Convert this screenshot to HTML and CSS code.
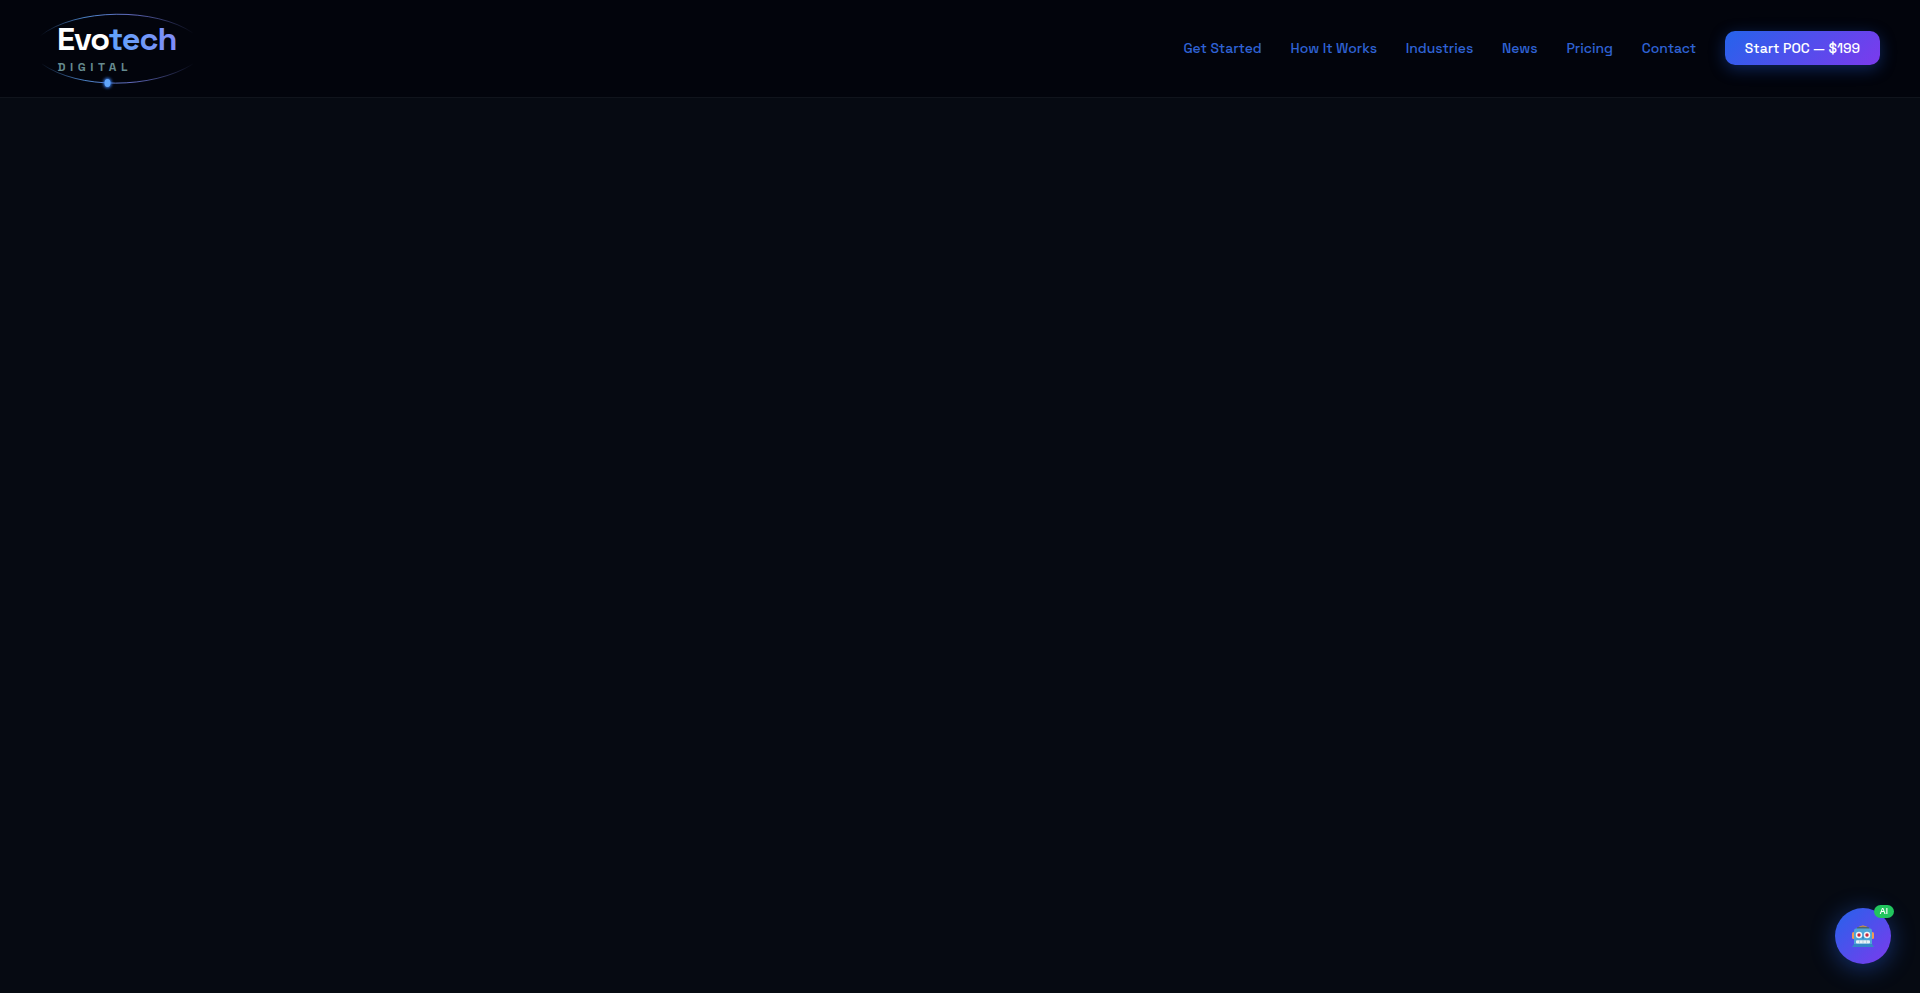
FILE: index.html
```html
<!DOCTYPE html>
<html lang="en">
<head>
  <meta charset="UTF-8" />
  <meta name="viewport" content="width=device-width, initial-scale=1.0"/>
  <title>Evotech Digital</title>
  <link rel="stylesheet" href="styles.css">
</head>
<body>

  <header class="navbar">
    <a href="#" class="logo" aria-label="Evotech Digital">
      <svg width="160" height="84" viewBox="0 0 160 84">
        <defs>
          <linearGradient id="arc" gradientUnits="userSpaceOnUse" x1="0" y1="0" x2="154" y2="0">
            <stop offset="0" stop-color="#60a5fa" stop-opacity="0"/>
            <stop offset="0.3" stop-color="#60a5fa" stop-opacity="0.8"/>
            <stop offset="0.6" stop-color="#818cf8" stop-opacity="0.75"/>
            <stop offset="1" stop-color="#818cf8" stop-opacity="0"/>
          </linearGradient>
          <linearGradient id="tech" gradientUnits="userSpaceOnUse" x1="69" y1="0" x2="137" y2="0">
            <stop offset="0" stop-color="#60a5fa"/>
            <stop offset="1" stop-color="#818cf8"/>
          </linearGradient>
          <filter id="glow" x="-150%" y="-150%" width="400%" height="400%">
            <feGaussianBlur stdDeviation="1.5"/>
          </filter>
        </defs>
        <path d="M0 29 C36 0.5 116 0.5 153 26" fill="none" stroke="url(#arc)" stroke-width="1"/>
        <path d="M2 57 C38 82.5 112 82.5 153 57" fill="none" stroke="url(#arc)" stroke-width="1"/>
        <text class="logo-name" x="17" y="43" textLength="119.5" lengthAdjust="spacingAndGlyphs" fill="#fff">Evo<tspan fill="url(#tech)">tech</tspan></text>
        <text class="logo-sub" x="17.5" y="64" textLength="70">DIGITAL</text>
        <ellipse cx="67.5" cy="76" rx="4" ry="5" fill="#3b82f6" filter="url(#glow)"/>
        <ellipse cx="67.5" cy="76" rx="3" ry="4" fill="#60a5fa"/>
      </svg>
    </a>

    <nav class="nav-links">
      <a href="#">Get Started</a>
      <a href="#">How It Works</a>
      <a href="#">Industries</a>
      <a href="#">News</a>
      <a href="#">Pricing</a>
      <a href="#">Contact</a>
      <a href="#" class="nav-cta">Start POC — $199</a>
    </nav>
  </header>

  <button class="chat-btn" aria-label="Chat">
    <svg width="24" height="24" viewBox="0 0 24 24">
      <path d="M6 4 Q12 -1 18 4Z" fill="#f5a43a"/>
      <path d="M6 3.2 Q12 2 18 3.2 V5.5 H6Z" fill="#4c6572"/>
      <rect x="1" y="8" width="3" height="7" rx="1.5" fill="#ef9a55"/>
      <rect x="20" y="8" width="3" height="7" rx="1.5" fill="#ef9a55"/>
      <path d="M5 4.5 H19 Q21 4.5 21 6.5 V20 H3 V6.5 Q3 4.5 5 4.5Z" fill="#4fa5d8"/>
      <path d="M3 20 H21 L23 23 H1Z" fill="#3487c6"/>
      <circle cx="8" cy="11" r="3.2" fill="#f1f5f9"/>
      <circle cx="16" cy="11" r="3.2" fill="#f1f5f9"/>
      <circle cx="8" cy="11" r="1.7" fill="#c5283d"/>
      <circle cx="16" cy="11" r="1.7" fill="#c5283d"/>
      <path d="M12 12 L13 14.5 H11Z" fill="#287ab8"/>
      <rect x="5" y="16.2" width="14" height="3.4" rx="1" fill="#e8f2f7"/>
      <path d="M8.5 16.2 V19.6 M12 16.2 V19.6 M15.5 16.2 V19.6" stroke="#9bbdcc" stroke-width=".6"/>
    </svg>
    <span class="chat-badge">AI</span>
  </button>

</body>
</html>
```

FILE: styles.css
```css
* {
  box-sizing: border-box;
}

body {
  font-family: 'Space Grotesk', 'Inter', sans-serif;
  background: #060a12;
  margin: 0;
  min-height: 100vh;
}

a {
  text-decoration: none;
}

.navbar {
  display: flex;
  align-items: center;
  justify-content: space-between;
  height: 98px;
  padding: 0 40px;
  background: #02040c;
  border-bottom: 1px solid #10141c;
}

.logo svg {
  display: block;
}

.logo-name {
  font-size: 32px;
  font-weight: 700;
  letter-spacing: -1px;
}

.logo-sub {
  font-size: 12px;
  font-weight: 600;
  fill: #668b90;
}

.nav-links {
  display: flex;
  align-items: center;
  gap: 28.8px;
  margin-bottom: 1px;
}

.nav-links a {
  color: #2f62d4;
  font-size: 13.92px;
  font-weight: 500;
  white-space: nowrap;
}

.nav-links .nav-cta {
  width: 155px;
  height: 34px;
  line-height: 34px;
  text-align: center;
  color: #fff;
  border-radius: 10px;
  background: linear-gradient(135deg, #2563eb, #7c3aed);
  box-shadow: 0 4px 16px rgba(37, 99, 235, 0.35);
}

.chat-btn {
  position: fixed;
  right: 29px;
  bottom: 29px;
  width: 56px;
  height: 56px;
  padding: 0;
  display: flex;
  align-items: center;
  justify-content: center;
  border: none;
  border-radius: 50%;
  background: linear-gradient(135deg, #2563eb, #7c3aed);
  box-shadow: 0 4px 24px rgba(37, 99, 235, 0.45);
  cursor: pointer;
}

.chat-badge {
  position: absolute;
  top: -3px;
  right: -3px;
  width: 20px;
  height: 13px;
  line-height: 13px;
  border-radius: 7px;
  background: #22c55e;
  color: #fff;
  font-family: 'Open Sans', sans-serif;
  font-size: 8.8px;
  font-weight: 600;
  text-align: center;
}
```
